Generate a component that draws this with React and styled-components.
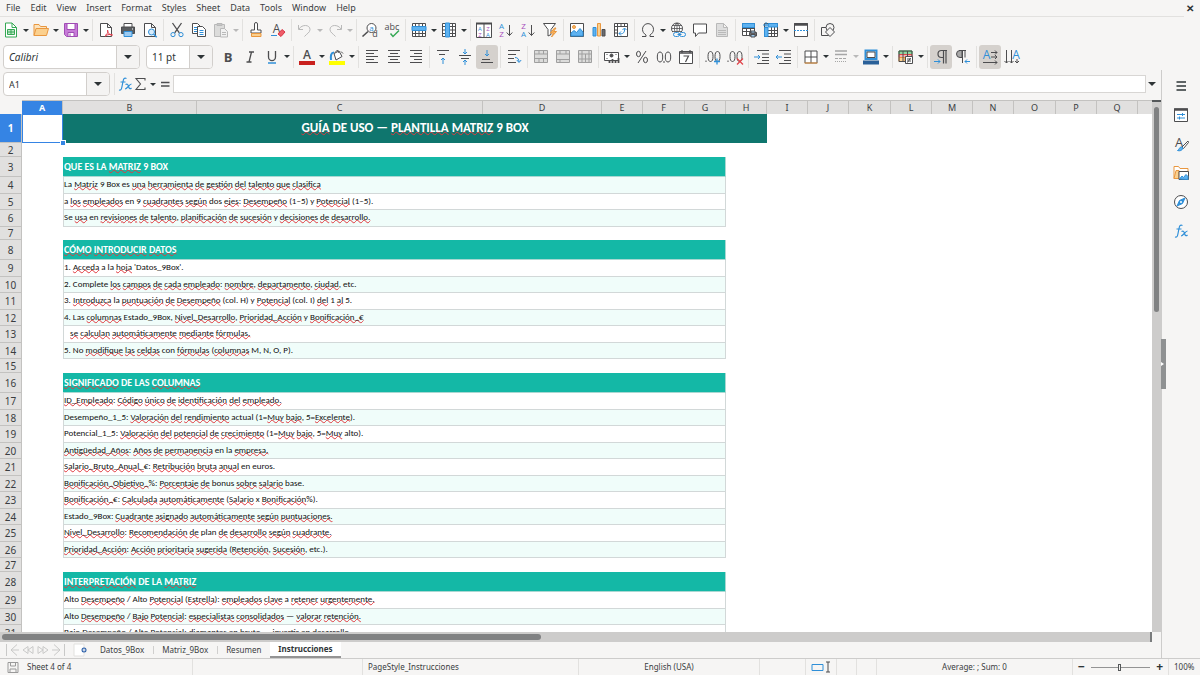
import { Fragment } from "react";
import styled, { createGlobalStyle, css } from "styled-components";

const GlobalStyle = createGlobalStyle`
  * {
    box-sizing: border-box;
  }

  body {
    margin: 0;
    background: #f6f5f4;
    color: #3a3d3f;
    font-family: "Noto Sans", sans-serif;
    font-size: 9px;
  }

  button, select, input {
    margin: 0;
    padding: 0;
    border: 0;
    background: none;
    color: inherit;
    font-family: inherit;
    font-size: inherit;
  }
`

const Window = styled.div`
  display: flex;
  flex-direction: column;
  height: 100vh;
  overflow: hidden;
  white-space: nowrap;
`

/* ---------- icons ---------- */

const INK = '#4d4d4f'
const BLUE = '#2f8fd8'
const ORANGE = '#e9973f'
const PURPLE = '#a64bbb'
const MUTED = '#b9b9b9'

const IconSvg = styled.svg`
  display: block;
  width: 16px;
  height: 16px;
  flex: none;
  overflow: visible;
  fill: none;
  stroke: ${INK};
  stroke-width: 1;

  text {
    stroke: none;
    fill: ${INK};
    font-family: "Open Sans", sans-serif;
    text-anchor: middle;
  }
`

const page = 'M2.5 1.5h7l4 4v9h-11z M9.5 1.5v4h4'

const icons = {
  new: <>
    <path d="M2.5 1h6.5l4.5 4.5v9.5h-11z" stroke="#35a854" fill="#fff" />
    <path d="M9 1v4.5h4.5" stroke="#35a854" />
    <path d="M4.5 7.5h7v5h-7zM4.5 10h7M8 7.5v5" stroke="#35a854" fill="#bfe8c8" />
  </>,
  open: <>
    <path d="M1 13.5v-11h5l1.5 2h6v2" stroke={ORANGE} fill="#fbe3bd" />
    <path d="M1 13.5l2-7h12.5l-2 7z" stroke={ORANGE} fill="#fbd08e" />
  </>,
  save: <>
    <path d="M1.5 1.5h13v13h-11l-2-2z" stroke="#a04cb4" fill="#c77bd8" />
    <path d="M4 1.5h8v6h-8z" stroke="#a04cb4" fill="#fff" />
    <path d="M5 10.5h6v4h-6z" stroke="#a04cb4" fill="#fff" />
    <path d="M7 11.5v3" stroke="#a04cb4" />
  </>,
  pdf: <>
    <path d={page} fill="#fff" />
    <path d="M7 13.5c3-1.5 3-4 2.5-5.5M9.5 8c0 3 2 5 5 5.5M7 14.5c1-1.5 4-2.5 7.5-2" stroke="#df3e4c" />
  </>,
  print: <>
    <path d="M4 5v-3.5h8v3.5" fill="#fff" />
    <path d="M1.5 5h13v6.5h-13z" fill="#5a5d60" />
    <path d="M4 9.5h8v5h-8z" fill="#9ccaf0" stroke={BLUE} />
    <path d="M12 7h1" stroke="#fff" />
  </>,
  preview: <>
    <path d={page} fill="#fff" />
    <circle cx="9.5" cy="10" r="3" stroke={BLUE} fill="#d7ebfa" />
    <path d="M11.7 12.2l3 3" stroke={BLUE} strokeWidth="1.5" />
  </>,
  cut: <>
    <path d="M3.5 1l6.8 9.8M12.5 1l-6.8 9.8" strokeWidth="1.3" />
    <circle cx="4" cy="12.6" r="2.1" stroke={BLUE} />
    <circle cx="12" cy="12.6" r="2.1" stroke={BLUE} />
  </>,
  copy: <>
    <path d="M1.5 1.5h5l3 3v7h-8z" fill="#fff" />
    <path d="M3 5.5h3M3 7.5h3M3 9.5h3" stroke={BLUE} />
    <path d="M6.5 4.5h5l3 3v7h-8z" fill="#fff" />
    <path d="M8.5 8.5h4M8.5 10.5h4M8.5 12.5h4" stroke={BLUE} />
  </>,
  paste: <>
    <path d="M1.5 2.5h10v12h-10z" fill="#dcdcdb" stroke={MUTED} />
    <path d="M4 1.5h5v2h-5z" fill="#c6c6c6" stroke={MUTED} />
    <path d="M7.5 6.5h4l3 3v5.5h-7z" fill="#f1f1f1" stroke={MUTED} />
    <path d="M9 10.5h4M9 12.5h4" stroke={MUTED} />
  </>,
  clone: <>
    <path d="M6.5 8v-6a1.5 1.5 0 0 1 3 0v6h3.5v3h-10v-3z" fill="#fff" />
    <path d="M3.5 11.5h9.5v3h-9.5z" stroke={ORANGE} fill="#fbd08e" />
  </>,
  clear: <>
    <text x="6.5" y="11" fontSize="12">A</text>
    <path d="M1 13.5h6" stroke={BLUE} />
    <path d="M8 12l4-4.5 3 2.5-4 4.5z" fill="#ef5c68" stroke="#d93445" />
  </>,
  undo: <path d="M1.5 3v4.5h4.5M2 7c3-5 11-4.5 11 .5 0 3-3 4-5.5 7" stroke={MUTED} />,
  redo: <path d="M14.5 3v4.5h-4.5M14 7c-3-5-11-4.5-11 .5 0 3 3 4 5.5 7" stroke={MUTED} />,
  find: <>
    <circle cx="9.5" cy="6" r="4.5" fill="#fff" />
    <path d="M6 9.5l-5.5 5" strokeWidth="1.6" />
    <text x="9.5" y="8.5" fontSize="8" style={{ fill: BLUE }}>a</text>
    <text x="13" y="15" fontSize="9">d</text>
  </>,
  spell: <>
    <text x="8" y="7.5" fontSize="9">abc</text>
    <path d="M6.5 11.5l2.5 3 6-6" stroke="#35a854" strokeWidth="1.5" />
  </>,
  row: <>
    <path d="M1.5 1.5h13v13h-13zM1.5 8.5h13M1.5 11.5h13M4.5 1.5v13M8 1.5v13M11.5 1.5v13" fill="#fff" />
    <path d="M1 4.5h14v4h-14z" fill="#5eb2f0" stroke={BLUE} />
  </>,
  column: <>
    <path d="M1.5 1.5h13v13h-13zM1.5 4.5h13M1.5 8h13M1.5 11.5h13M11.5 1.5v13M8.5 1.5v13" fill="#fff" />
    <path d="M4.5 1h4v14h-4z" fill="#5eb2f0" stroke={BLUE} />
  </>,
  sort: <>
    <path d="M.5 1.5h15v14h-15z" fill="#fff" />
    <path d="M0 1.5h16" strokeWidth="2" />
    <path d="M8 2v13" />
    <text x="4" y="8.5" fontSize="6" style={{ fill: BLUE }}>A</text>
    <text x="4" y="14.5" fontSize="6" style={{ fill: PURPLE }}>Z</text>
    <text x="12" y="8.5" fontSize="6" style={{ fill: PURPLE }}>Z</text>
    <text x="12" y="14.5" fontSize="6" style={{ fill: BLUE }}>A</text>
  </>,
  asc: <>
    <text x="3.5" y="7" fontSize="8" style={{ fill: BLUE }}>A</text>
    <text x="3.5" y="15" fontSize="8" style={{ fill: PURPLE }}>Z</text>
    <path d="M11.5 3v10.5M8.7 10.5l2.8 3 2.8-3" />
  </>,
  desc: <>
    <text x="3.5" y="7" fontSize="8" style={{ fill: PURPLE }}>Z</text>
    <text x="3.5" y="15" fontSize="8" style={{ fill: BLUE }}>A</text>
    <path d="M11.5 3v10.5M8.7 10.5l2.8 3 2.8-3" />
  </>,
  filter: <>
    <path d="M1.5 1.5h12l-4.5 6v5l-3 1.5v-6.5z" fill="#fff" />
    <path d="M12.5 6l-4 5h3l-2 4 5-5.5h-3l2.5-3.5z" fill="#fbb862" stroke={ORANGE} />
  </>,
  image: <>
    <path d="M1.5 1.5h13v13h-13z" fill="#fff" />
    <circle cx="5" cy="5" r="1.5" fill="#fbb862" stroke={ORANGE} />
    <path d="M2 14v-3l3-2.5 2.5 2 3.5-4 3 3.5v4z" fill="#5eb2f0" stroke={BLUE} />
  </>,
  chart: <>
    <path d="M2 5.5h3v8.5h-3z" fill="#5eb2f0" stroke={BLUE} />
    <path d="M6.5 1.5h3v12.5h-3z" fill="#fbd08e" stroke={ORANGE} />
    <path d="M11 7.5h3v6.5h-3z" fill="#6d6d6f" />
  </>,
  pivot: <>
    <path d="M1.5 1.5h13v13h-13zM1.5 4.5h13M4.5 1.5v13M8 1.5v3M11.5 1.5v3M1.5 8h3M1.5 11h3" fill="#fff" />
    <path d="M6 11.5c4 1 6-1 5.5-5M9.5 8l2-2 2 2M8 9.5l-2 2 2 2" stroke={BLUE} />
  </>,
  omega: <path d="M2 14.5h4v-1.5c-2-1.3-3.5-3-3.5-5.7a5.5 5.7 0 0 1 11 0c0 2.7-1.5 4.4-3.5 5.7v1.5h4" />,
  link: <>
    <circle cx="7" cy="6.5" r="5.5" fill="#fff" />
    <path d="M1.5 6.5h11M7 1v11M3 3.5h8M3 9.5h8M7 1c-3.5 3-3.5 8 0 11M7 1c3.5 3 3.5 8 0 11" strokeWidth=".8" />
    <path d="M3 10h13v5h-13z" fill="#f6f5f4" stroke="none" />
    <rect x="3.5" y="10.5" width="6" height="4" rx="2" stroke={BLUE} />
    <rect x="9.5" y="10.5" width="6" height="4" rx="2" stroke={BLUE} />
    <path d="M7.5 12.5h4" stroke={BLUE} />
  </>,
  comment: <path d="M1.5 2h13v9h-8l-3 3.5v-3.5h-2z" fill="#fff" />,
  headers: <>
    <path d={page} stroke={MUTED} fill="#dedede" />
    <path d="M4 8.5h8M4 10.5h8M4 12.5h8" stroke={MUTED} />
  </>,
  printArea: <>
    <path d="M1.5 1.5h12v12h-12zM1.5 9.5h12M1.5 6.5h12M5.5 1.5v12M9.5 1.5v12" fill="#fff" />
    <path d="M1.5 1.5h12v4h-12z" fill="#5eb2f0" stroke={BLUE} />
    <path d="M8.5 10.5h7v3.5h-7z" fill="#6d6d6f" />
    <path d="M10 9h4v2h-4zM10 12.5h4v2.5h-4z" fill="#9ccaf0" />
  </>,
  freeze: <>
    <path d="M1.5 1.5h13v13h-13z" fill="#fff" />
    <path d="M5 8.5h9.5M5 11.5h9.5M8.5 5v9.5M11.5 5v9.5" />
    <path d="M1.5 5.5h3.5v9h-3.5zM5 1.5h9.5v3.5h-9.5z" fill="#5eb2f0" stroke={BLUE} />
    <path d="M0 3h6M3 0v6" stroke={BLUE} />
  </>,
  split: <>
    <path d="M1.5 1.5h13v13h-13z" fill="#fff" />
    <path d="M1 2.5h14" strokeWidth="2.5" />
    <path d="M1 8.5h14" stroke={BLUE} strokeDasharray="2 1" />
  </>,
  shapes: <>
    <path d="M1.5 5.5h7v8h-7z" />
    <circle cx="10" cy="5.5" r="4" fill="#f6f5f4" />
    <path d="M10 5.5l4.5 4.5-4.5 4.5-4.5-4.5z" fill="#f6f5f4" />
  </>,
  bold: <text x="8" y="12.5" fontSize="13" fontWeight="700">B</text>,
  italic: <path d="M7 3h5M4.5 13h5M9.5 3l-2.5 10" strokeWidth="1.3" />,
  underline: <>
    <path d="M4.500 2v6a3.500 3.700 0 0 0 7 0v-6" strokeWidth="1.300" />
    <path d="M4 14h8" stroke={BLUE} strokeWidth="1.500" />
  </>,
  fontColor: <>
    <text x="8" y="10" fontSize="12" fontWeight="600">A</text>
    <path d="M0 14h16" stroke="#c9211e" strokeWidth="4" />
  </>,
  highlight: <>
    <path d="M5 4.5l5-2.5 3 5.5-6 3.5z" fill="#fff" />
    <path d="M6 3.5l2.5-2.5 1.5 3M12 2.5l2 2" />
    <path d="M5 3.5c-3 0-3.5 3-3 7.5" stroke={BLUE} strokeWidth="2" />
    <path d="M0 14h16" stroke="#ffff00" strokeWidth="4" />
  </>,
  left: <path d="M2 1.5h12M2 4.5h8M2 7.5h12M2 10.5h8M2 13.5h12" />,
  center: <path d="M2 1.5h12M4 4.5h8M2 7.5h12M4 10.5h8M2 13.5h12" />,
  right: <path d="M2 1.5h12M6 4.5h8M2 7.5h12M6 10.5h8M2 13.5h12" />,
  top: <>
    <path d="M2 1.5h12M4 5.5h6" />
    <path d="M8 15v-6M6 11l2-2 2 2" stroke={BLUE} />
  </>,
  middle: <>
    <path d="M2 6.5h12M4 9.5h8" />
    <path d="M8 0v5M6 3l2 2 2-2M8 16v-5M6 13l2-2 2 2" stroke={BLUE} />
  </>,
  bottom: <>
    <path d="M3 10.5h8M2 13.5h12" />
    <path d="M8 1v6M6 5l2 2 2-2" stroke={BLUE} />
  </>,
  wrap: <>
    <path d="M2 1.5h12M2 5.5h8M2 9.5h6M2 13.5h8" />
    <path d="M9 8.500c2.500 0 4 1.500 4 4.500M10.800 11l2.200 2.500 2.200-2.500" stroke={BLUE} />
  </>,
  merge: <path d="M1.5 1.5h13v12h-13zM1.5 5h13M1.5 9.5h13M6 1.5v3.5M10.5 1.5v3.5M6 9.5v4M10.5 9.5v4" fill="#dcdcdb" stroke="#9f9f9f" />,
  mergeCells: <path d="M1.5 1.5h13v12h-13zM1.5 5h13M1.5 10.5h13M5 1.5v3.5M11 1.5v3.5M5 10.5v3" fill="#dcdcdb" stroke="#9f9f9f" />,
  unmerge: <path d="M1.5 1.5h13v12h-13zM1.5 5h13M1.5 10h13M5 1.5v12M8.5 5v8.5M12 1.5v12" fill="#dcdcdb" stroke="#9f9f9f" />,
  currency: <>
    <path d="M.5 3.5h14v8h-14z" fill="#fff" />
    <circle cx="7.5" cy="6.5" r="1.5" fill={INK} />
    <path d="M2.5 5.5h1M11.5 5.5h1M2.500 9.500h1" />
    <path d="M5.500 14v-3M8.500 14v-4M11.500 14v-3M14.500 14v-5" strokeWidth="1.800" />
  </>,
  percent: <>
    <ellipse cx="4.5" cy="5" rx="2" ry="2.7" />
    <ellipse cx="11.5" cy="11" rx="2" ry="2.7" />
    <path d="M12 2l-8 12" />
  </>,
  number: <>
    <ellipse cx="4" cy="8" rx="2.7" ry="5" />
    <ellipse cx="12" cy="8" rx="2.7" ry="5" />
    <path d="M8 12v2" />
  </>,
  date: <>
    <path d="M1.5 2.5h13v12h-13z" fill="#fff" />
    <path d="M1 4h14" strokeWidth="1.5" />
    <path d="M4 1v3M12 1v3M5.5 7h5l-3 6" strokeWidth="1.2" />
  </>,
  addDecimal: <>
    <path d="M1 11.5v1.5" />
    <ellipse cx="5.5" cy="7.5" rx="2.5" ry="5" />
    <ellipse cx="12.5" cy="7.5" rx="2.5" ry="5" />
    <path d="M12 9.5v6M9 12.5h6" stroke={BLUE} strokeWidth="1.3" />
  </>,
  removeDecimal: <>
    <path d="M1 11.5v1.5" />
    <ellipse cx="5.5" cy="7.5" rx="2.5" ry="5" />
    <ellipse cx="12.5" cy="7.5" rx="2.5" ry="5" />
    <path d="M10 9.5l6 6M16 9.5l-6 6" stroke="#e2454b" strokeWidth="1.3" />
  </>,
  indent: <>
    <path d="M3 1.5h12M8 5h7M8 8.5h7M8 11.5h7M3 14.5h12" />
    <path d="M0 8h6M4 6l2 2-2 2" stroke={BLUE} />
  </>,
  outdent: <>
    <path d="M3 1.5h12M8 5h7M8 8.5h7M8 11.5h7M3 14.5h12" />
    <path d="M6 8h-6M2 6l-2 2 2 2" stroke={BLUE} />
  </>,
  borders: <>
    <path d="M2 2h12v12h-12z" fill="#fff" />
    <path d="M8 2v12M2 8h12" />
    <path d="M1.5 14h13" stroke={ORANGE} />
  </>,
  borderStyle: <>
    <path d="M2 2h12M2 5.5h12" stroke="#a6a6a6" strokeWidth="1.5" />
    <path d="M2 9.5h12" stroke="#a6a6a6" strokeDasharray="3 1" />
    <path d="M2 12.5h12" stroke="#a6a6a6" strokeDasharray="1 1" />
  </>,
  borderColor: <>
    <path d="M2.5 1.5h11v8.5h-11z" fill="#fff" stroke={BLUE} strokeWidth="2" />
    <path d="M4 3h8v5.500h-8z" />
    <path d="M0 13.5h16" stroke="#2a6099" strokeWidth="4" />
  </>,
  conditional: <>
    <path d="M1 2h13v3.500h-13z" fill="#8fd6a0" stroke="#35a854" />
    <path d="M1 5.500h13v3h-13z" fill="#f5b3b3" stroke="#e2454b" />
    <path d="M1 8.500h6v4h-6z" fill="#fbd08e" stroke={ORANGE} />
    <path d="M1 2h13v10.500h-13zM5 2v10.500M9.500 2v6.500" />
    <path d="M7.500 7.500h7v7h-7z" fill="#fff" />
    <path d="M9 10h4M9 12h4M12.500 9l-3 4.500" />
  </>,
  ltr: <>
    <path d="M14 1.5h-5.5a3.5 3.5 0 0 0 0 7h1.5M10.5 1.5v13M13 1.5v13" strokeWidth="1.2" />
    <path d="M1 12.5h6M5 10.5l2 2-2 2" stroke={BLUE} />
  </>,
  rtl: <>
    <path d="M7 1.5h-2a3.5 3.500 0 0 0 0 7h2z" fill="#a9a9a9" />
    <path d="M4 1.500h7M7.5 1.5v12.500M10 1.5v7" />
    <path d="M15 12.5h-5M12 10.5l-2 2 2 2" stroke={BLUE} />
  </>,
  textHorizontal: <>
    <text x="4.5" y="10" fontSize="12" style={{ fill: BLUE }}>A</text>
    <path d="M9 3.5h6M13 1.5l2 2-2 2M9 8h6M13 6l2 2-2 2M1 13.5h14M13 11.5l2 2-2 2" />
  </>,
  textVertical: <>
    <text x="12" y="10" fontSize="12" style={{ fill: BLUE }}>A</text>
    <path d="M2.5 1v13M.5 12l2 2 2-2M7.5 1v13M5.5 12l2 2 2-2M13 10v4M11 12l2 2 2-2" />
  </>,
  fx: <>
    <path d="M9.5 2.5c-2.5-1-3 .5-3.5 3l-1.2 6c-.4 2-1 3-2.8 2.500M3.5 6h5" stroke={BLUE} strokeWidth="1.2" />
    <path d="M8.5 8.5c2-1 2.5 0 3 2s1.5 3 3 1.5M14.5 8c-2 0-4.5 5-6.500 5" stroke={BLUE} strokeWidth="1.2" />
  </>,
  sigma: <path d="M12 4.5v-2h-9l4.5 5.5-4.5 5.5h9v-2" strokeWidth="1.1" />,
  equals: <path d="M4 6.5h8.5M4 10h8.5" strokeWidth="1.5" />,
  menu: <path d="M3.5 4h9.5M3.5 8h9.5M3.5 12h9.5" stroke="#2e3436" strokeWidth="1.6" />,
  properties: <>
    <path d="M1.5 2h13v12.5h-13z" fill="#fff" />
    <path d="M1 2.5h14" strokeWidth="2.5" />
    <path d="M4 7.5h8M9.5 6v3M4 11h8M6.5 9.5v3" stroke={BLUE} />
  </>,
  styles: <>
    <text x="6" y="10.5" fontSize="13">A</text>
    <path d="M15 5l-6 6 1.5 1.5 5-6z" fill="#fff" />
    <path d="M4.5 14.5c2 .8 5 0 5.5-2.500l-1.5-1.2c-2 .2-2 2.500-4 3.700z" fill="#5eb2f0" stroke={BLUE} />
  </>,
  gallery: <>
    <path d="M1 13.5v-12h4.5l1.5 2h8v3" stroke={ORANGE} fill="#fff" />
    <path d="M1 13.5l2-8h3v8z" stroke={ORANGE} fill="#fbd08e" />
    <path d="M6 6.5h9.5v8h-9.5z" fill="#fff" />
    <path d="M6.5 14l2.5-3 1.5 1.5 2.5-3 2 2v3z" fill="#5eb2f0" stroke={BLUE} />
  </>,
  navigator: <>
    <circle cx="8" cy="8" r="6.5" fill="#fff" />
    <path d="M12 4l-2.5 5.5-5.5 2.5 2.5-5.5z" fill={BLUE} stroke={BLUE} />
    <circle cx="8" cy="8" r="1" fill="#fff" stroke="none" />
  </>,
  saved: <path d="M3 3.5h10v10h-10zM5.5 3.5v3.5h5v-3.500M5 13.5v-3.500h6v3.500" stroke="#9a9a9a" />,
  addSheet: <>
    <path d="M1 2h10v12h-10z" fill="#fff" stroke="#e2e1df" />
    <circle cx="11" cy="8" r="2.5" fill="#2a5ea8" stroke="none" />
    <path d="M9.500 8h3M11 6.5v3" stroke="#fff" />
  </>,
  first: <path d="M1.5 2v12M12 2.5l-6 5.5 6 5.5M6 8h8" stroke="#c9c9c8" />,
  previous: <path d="M8 4.5l-5 3.5 5 3.5zM13 4.5l-5 3.5 5 3.5z" stroke="#c9c9c8" />,
  next: <path d="M3 4.5l5 3.5-5 3.5zM8 4.5l5 3.5-5 3.5z" stroke="#c9c9c8" />,
  last: <path d="M14.5 2v12M4 2.5l6 5.5-6 5.5M2 8h8" stroke="#c9c9c8" />,
}

const Icon = ({ name }) => (
  <IconSvg viewBox="0 0 16 16" aria-hidden="true">{icons[name]}</IconSvg>
)

/* ---------- menu and toolbars ---------- */

const MenuBar = styled.nav`
  display: flex;
  flex: none;
  align-items: center;
  gap: 10px;
  height: 17px;
  margin-right: 16px;
  padding-left: 6px;
  border-bottom: 1px solid #e2e1df;
`

const MenuItem = styled.button`
  line-height: 16px;
`

const CloseButton = styled.button`
  margin-left: auto;
  margin-right: -10px;
  color: #2e3436;
  font-size: 10px;
  font-weight: 700;
  line-height: 16px;
`

const Toolbar = styled.div`
  display: flex;
  flex: none;
  align-items: center;
  height: ${props => props.$height}px;
  padding-left: ${props => props.$inset || 0}px;
`

const ToolButton = styled.button`
  display: flex;
  flex: none;
  align-items: center;
  justify-content: center;
  width: 22px;
  height: 24px;
  border-radius: 3px;
  ${props => props.$active && css`
    background: #d5d1cd;
  `}
`

const DropButton = styled.button`
  display: flex;
  flex: none;
  align-items: center;
  justify-content: center;
  width: 8px;
  height: 24px;
`

const Triangle = styled.span`
  border-left: ${props => props.$size}px solid transparent;
  border-right: ${props => props.$size}px solid transparent;
  border-top: ${props => props.$size}px solid ${props => props.$muted ? '#b9b9b9' : '#2e3436'};
`

const Divider = styled.span`
  flex: none;
  width: 1px;
  height: 22px;
  margin: 0 2px;
  background: #e2e1df;
`

const ComboBox = styled.label`
  position: relative;
  flex: none;
  width: ${props => props.$width}px;
  height: 24px;
  margin-right: ${props => props.$after}px;
`

const ComboSelect = styled.select`
  appearance: none;
  width: 100%;
  height: 100%;
  padding-left: 5px;
  border: 1px solid #d2cfcc;
  border-radius: 4px;
  background: #fff;
  color: #2e3436;
  font-size: ${props => props.$small ? 9 : 10}px;
  font-style: ${props => props.$italic ? 'italic' : 'normal'};
`

const ComboArrow = styled.span`
  position: absolute;
  top: 1px;
  right: 1px;
  bottom: 1px;
  display: flex;
  align-items: center;
  justify-content: center;
  width: 23px;
  border-left: 1px solid #d2cfcc;
  border-radius: 0 3px 3px 0;
  background: #f4f3f2;
  pointer-events: none;
`

const Combo = ({ label, value, width, after, italic, small }) => (
  <ComboBox $width={width} $after={after}>
    <ComboSelect aria-label={label} $italic={italic} $small={small}>
      <option>{value}</option>
    </ComboSelect>
    <ComboArrow><Triangle $size={4} /></ComboArrow>
  </ComboBox>
)

// "|" is a divider, "+" after a name adds a drop-down arrow, "-" a disabled one, "!" marks it pressed
const standardTools = 'new+ open+ save+ | pdf print preview | cut copy paste- | clone clear | undo- redo- | find spell | row+ column+ | sort asc desc filter | image chart pivot | omega+ link comment headers | printArea freeze+ split | shapes'
const formatTools = 'bold italic underline+ | fontColor+ highlight+ | left center right | top middle bottom! | wrap | merge mergeCells unmerge | currency+ percent number date | addDecimal removeDecimal | indent outdent | borders+ borderStyle- borderColor+ | conditional+ | ltr! rtl | textHorizontal! textVertical'

const Tools = ({ list }) => list.split(' ').map((item, i) => {
  if (item === '|') return <Divider key={i} />
  const name = item.replace(/[+!-]/, '')
  const drop = item.endsWith('+') || item.endsWith('-')
  return (
    <Fragment key={i}>
      <ToolButton aria-label={name} $active={item.endsWith('!')}><Icon name={name} /></ToolButton>
      {drop && (
        <DropButton aria-label={`${name} options`}>
          <Triangle $size={3} $muted={item.endsWith('-')} />
        </DropButton>
      )}
    </Fragment>
  )
})

/* ---------- main area ---------- */

const Main = styled.main`
  display: flex;
  flex: 1;
  min-height: 0;
`

const Document = styled.section`
  display: flex;
  flex: 1;
  flex-direction: column;
  min-width: 0;
`

const FormulaBar = styled.div`
  display: flex;
  flex: none;
  align-items: center;
  height: 30px;
  padding: 0 5px 2px 3px;
`

const FormulaButton = styled(ToolButton)`
  width: 16px;
`

const FormulaInput = styled.input`
  flex: 1;
  min-width: 0;
  height: 18px;
  margin: 0 2px 0 0;
  border: 1px solid #d8d6d4;
  background: #fff;
`

const SheetArea = styled.div`
  display: flex;
  flex: 1;
  min-height: 0;
`

const SheetView = styled.div`
  flex: 1;
  min-width: 0;
  overflow: hidden;
  background: #fff;
`

const Sheet = styled.table`
  table-layout: fixed;
  width: 1179px;
  border-spacing: 0;

  th, td {
    padding: 0;
    overflow: hidden;
  }
`

const Column = styled.col`
  width: ${props => props.$width}px;
`

const ColumnHead = styled.th`
  height: 14px;
  border: solid #c3c2c0;
  border-width: 1px 1px 0 0;
  background: ${props => props.$selected ? '#3584e4' : '#e1e0df'};
  color: ${props => props.$selected ? '#fff' : '#3a3d3f'};
  font-weight: ${props => props.$selected ? 700 : 400};
  line-height: 13px;
`

const Corner = styled.td`
  height: 14px;
  background: #f6f5f4;
`

const RowHead = styled.th`
  height: ${props => props.$height}px;
  border: solid #c3c2c0;
  border-width: 0 1px 1px 0;
  background: ${props => props.$selected ? '#3584e4' : '#e1e0df'};
  color: ${props => props.$selected ? '#fff' : '#3a3d3f'};
  font-weight: ${props => props.$selected ? 700 : 400};
  font-size: 10px;
  line-height: 12px;
`

const CellBase = styled.td`
  color: #111;
  font-family: Carlito, Lato, sans-serif;
  line-height: 12px;
  text-align: left;
`

const SelectedCell = styled(CellBase)`
  && {
    position: relative;
    overflow: visible;
  }
  outline: 1px solid #3584e4;
  outline-offset: -1px;
`

const FillHandle = styled.span`
  position: absolute;
  right: -2px;
  bottom: -2px;
  width: 4px;
  height: 4px;
  background: #3584e4;
  box-shadow: 0 0 0 1px #fff;
`

const TitleCell = styled(CellBase)`
  && {
    padding-bottom: 2px;
  }
  background: #0f766e;
  color: #fff;
  font-size: 13px;
  font-weight: 700;
  text-align: center;
`

const SectionCell = styled(CellBase)`
  && {
    padding-left: 1px;
  }
  border: solid #a9d8d2;
  border-width: 0 1px 1px 0;
  background: #14b8a6;
  color: #fff;
  font-size: 10px;
  font-weight: 700;
`

const TextCell = styled(CellBase)`
  && {
    padding-bottom: 2px;
  }
  border: solid #d2d8d8;
  border-width: 0 1px 1px 1px;
  background: ${props => props.$shaded ? '#f0fdfa' : '#fff'};
  font-size: 9px;
  white-space: pre;
`

const Misspelt = styled.span`
  text-decoration: underline wavy #e0393e 1px;
  text-decoration-skip-ink: none;
  text-underline-offset: -1px;
`

const columns = [
  ['A', 41], ['B', 134], ['C', 286], ['D', 119], ['E', 41], ['F', 42], ['G', 41], ['H', 41], ['I', 41],
  ['J', 41], ['K', 42], ['L', 41], ['M', 41], ['N', 41], ['O', 42], ['P', 41], ['Q', 41], ['', 41],
]

// words between tildes get the spelling wave
const title = '~GUÍA~ DE USO — ~PLANTILLA~ ~MATRIZ~ 9 BOX'
const sections = [
  {
    heading: 'QUE ES LA ~MATRIZ~ 9 BOX',
    shadeFirst: true,
    lines: [
      'La ~Matriz~ 9 Box es ~una~ ~herramienta~ ~de~ ~gestión~ ~del~ ~talento~ ~que~ ~clasifica~',
      'a ~los~ ~empleados~ en 9 ~cuadrantes~ ~según~ dos ~ejes~: ~Desempeño~ (1–5) y ~Potencial~ (1–5).',
      'Se ~usa~ en ~revisiones~ ~de~ ~talento~, ~planificación~ ~de~ ~sucesión~ y ~decisiones~ ~de~ ~desarrollo.~',
    ],
  },
  {
    heading: '~CÓMO~ ~INTRODUCIR~ ~DATOS~',
    lines: [
      "1. ~Acceda~ a la ~hoja~ 'Datos_9Box'.",
      '2. Complete ~los~ ~campos~ ~de~ ~cada~ ~empleado~: ~nombre~, ~departamento~, ~ciudad~, etc.',
      '3. ~Introduzca~ la ~puntuación~ ~de~ ~Desempeño~ (col. H) y ~Potencial~ (col. I) ~del~ 1 ~al~ 5.',
      '4. Las ~columnas~ Estado_9Box, ~Nivel_Desarrollo~, ~Prioridad_Acción~ y ~Bonificación_€~',
      '   ~se~ ~calculan~ ~automáticamente~ ~mediante~ ~fórmulas.~',
      '5. No ~modifique~ ~las~ ~celdas~ con ~fórmulas~ (~columnas~ M, N, O, P).',
    ],
  },
  {
    heading: '~SIGNIFICADO~ DE LAS ~COLUMNAS~',
    lines: [
      '~ID_Empleado~: ~Código~ ~único~ ~de~ ~identificación~ ~del~ ~empleado.~',
      'Desempeño_1_5: ~Valoración~ ~del~ ~rendimiento~ actual (1=~Muy~ ~bajo~, 5=~Excelente~).',
      'Potencial_1_5: ~Valoración~ ~del~ ~potencial~ ~de~ ~crecimiento~ (1=~Muy~ ~bajo~, 5=~Muy~ alto).',
      '~Antigüedad_Años~: ~Años~ ~de~ ~permanencia~ en la ~empresa.~',
      '~Salario_Bruto_Anual_~€: ~Retribución~ ~bruta~ ~anual~ en euros.',
      '~Bonificación_Objetivo_~%: ~Porcentaje~ ~de~ bonus ~sobre~ ~salario~ base.',
      '~Bonificación_~€: ~Calculada~ ~automáticamente~ (~Salario~ x ~Bonificación~%).',
      'Estado_9Box: ~Cuadrante~ ~asignado~ ~automáticamente~ ~según~ ~puntuaciones.~',
      '~Nivel_Desarrollo~: ~Recomendación~ ~de~ plan ~de~ ~desarrollo~ ~según~ ~cuadrante.~',
      '~Prioridad_Acción~: ~Acción~ ~prioritaria~ ~sugerida~ (~Retención~, ~Sucesión~, etc.).',
    ],
  },
  {
    heading: '~INTERPRETACIÓN~ DE LA ~MATRIZ~',
    lines: [
      'Alto ~Desempeño~ / Alto ~Potencial~ (~Estrella~): ~empleados~ ~clave~ a ~retener~ ~urgentemente.~',
      'Alto ~Desempeño~ / ~Bajo~ ~Potencial~: ~especialistas~ ~consolidados~ — ~valorar~ ~retención.~',
      '~Bajo~ ~Desempeño~ / Alto ~Potencial~: ~diamantes~ ~en~ ~bruto~ — ~invertir~ ~en~ ~desarrollo.~',
    ],
  },
]

const rows = [{ kind: 'title', text: title, height: 29 }]
sections.forEach(({ heading, shadeFirst, lines }, index) => {
  rows.push({ kind: 'gap', height: index === 1 ? 13 : 14 })
  rows.push({ kind: 'section', text: heading, height: 20 })
  lines.forEach((text, i) => {
    rows.push({ kind: 'text', text, height: i % 2 ? 16 : 17, shaded: shadeFirst ? i % 2 === 0 : i % 2 === 1 })
  })
})

const Spelled = ({ text }) => text.split('~').map((part, i) => (
  i % 2 ? <Misspelt key={i}>{part}</Misspelt> : part
))

const SheetRow = ({ row, number }) => (
  <tr>
    <RowHead scope="row" $height={row.height} $selected={number === 1}>{number}</RowHead>
    {number === 1 ? <SelectedCell><FillHandle /></SelectedCell> : <td />}
    {row.kind === 'title' && <TitleCell colSpan={7}><Spelled text={row.text} /></TitleCell>}
    {row.kind === 'section' && <SectionCell colSpan={6}><Spelled text={row.text} /></SectionCell>}
    {row.kind === 'text' && <TextCell colSpan={6} $shaded={row.shaded}><Spelled text={row.text} /></TextCell>}
  </tr>
)

const VerticalTrack = styled.div`
  flex: none;
  width: 9px;
  padding: 5px 2px 0;
  border-top: 2px solid #55585a;
  background: #cdcccb;
`

const VerticalThumb = styled.div`
  height: 39%;
  border-radius: 3px;
  background: #808182;
`

const HorizontalTrack = styled.div`
  flex: none;
  height: 10px;
  margin-right: 9px;
  padding: 2px;
  border-right: 2px solid #7b7d7e;
  background: #cdcccb;
`

const HorizontalThumb = styled.div`
  width: 47%;
  height: 6px;
  border-radius: 3px;
  background: #808182;
`

const TabBar = styled.div`
  display: flex;
  flex: none;
  align-items: stretch;
  height: 16px;
  padding-left: 5px;
`

const TabNav = styled.button`
  width: 15px;
`

const AddSheet = styled.button`
  width: 16px;
  margin: 0 2px 0 8px;
`

const Tab = styled.button`
  position: relative;
  padding: 0 9px;
  font-size: 8px;
  line-height: 14px;
  ${props => props.$active ? css`
    padding: 0 8px;
    border-bottom: 2px solid #949494;
    background: #fff;
    color: #2e3436;
    font-weight: 700;
  ` : css`
    & + &::before {
      content: "";
      position: absolute;
      top: 4px;
      left: 0;
      height: 8px;
      border-left: 1px solid #d0cfce;
    }
  `}
`

const Sidebar = styled.aside`
  position: relative;
  display: flex;
  flex: none;
  flex-direction: column;
  align-items: center;
  gap: 5px;
  width: 39px;
  padding-top: 4px;
  border-left: 1px solid #cdcccb;
`

const SidebarHandle = styled.button`
  position: absolute;
  top: 269px;
  left: -1px;
  display: flex;
  align-items: center;
  width: 5px;
  height: 50px;
  background: #8f9192;

  &::before {
    content: "";
    border: 2px solid transparent;
    border-left: 3px solid #fff;
    border-right: 0;
  }
`

const StatusBar = styled.footer`
  display: grid;
  flex: none;
  grid-template-columns: 192fr 170fr 216fr 181fr 46fr 31fr 20fr 20fr 196fr 96fr 32fr;
  height: 17px;
  border-top: 1px solid #cdcccb;
  font-size: 8px;
`

const StatusField = styled.div`
  display: flex;
  align-items: center;
  justify-content: ${props => props.$align || 'flex-start'};
  gap: 6px;
  min-width: 0;
  padding: 0 5px;
  line-height: 16px;

  & + & {
    border-left: 1px solid #e2e1df;
  }
`

const ModeIcon = styled.svg`
  flex: none;
  width: 20px;
  height: 12px;
  fill: none;
`

const ZoomButton = styled.button`
  flex: none;
  color: #2e3436;
  font-size: 12px;
  font-weight: 700;
  line-height: 14px;
`

const ZoomSlider = styled.input`
  appearance: none;
  flex: 1;
  min-width: 0;
  height: 8px;
  background: linear-gradient(#949494, #949494) center / 100% 1px no-repeat;

  &::-webkit-slider-thumb {
    appearance: none;
    width: 3px;
    height: 7px;
    border: 1px solid #55585a;
    background: #f6f5f4;
  }
`

const menus = ['File', 'Edit', 'View', 'Insert', 'Format', 'Styles', 'Sheet', 'Data', 'Tools', 'Window', 'Help']
const tabs = ['Datos_9Box', 'Matriz_9Box', 'Resumen', 'Instrucciones']
const decks = ['menu', 'properties', 'styles', 'gallery', 'navigator', 'fx']

export default function App() {
  return (
    <Window>
      <GlobalStyle />
      <MenuBar>
        {menus.map(menu => <MenuItem key={menu}>{menu}</MenuItem>)}
        <CloseButton aria-label="Close document">✕</CloseButton>
      </MenuBar>
      <Toolbar $height={26}>
        <Tools list={standardTools} />
      </Toolbar>
      <Toolbar $height={27} $inset={3}>
        <Combo label="Font name" value="Calibri" width={137} after={6} italic />
        <Combo label="Font size" value="11 pt" width={67} after={4} />
        <Tools list={formatTools} />
      </Toolbar>
      <Main>
        <Document>
          <FormulaBar>
            <Combo label="Name box" value="A1" width={107} after={2} small />
            <Divider />
            <FormulaButton aria-label="Function wizard"><Icon name="fx" /></FormulaButton>
            <FormulaButton aria-label="Select function"><Icon name="sigma" /></FormulaButton>
            <DropButton aria-label="Function options"><Triangle $size={3} /></DropButton>
            <FormulaButton aria-label="Formula"><Icon name="equals" /></FormulaButton>
            <FormulaInput aria-label="Input line" />
            <DropButton aria-label="Expand formula bar"><Triangle $size={4} /></DropButton>
          </FormulaBar>
          <SheetArea>
            <SheetView>
              <Sheet>
                <colgroup>
                  <Column $width={22} />
                  {columns.map(([name, width]) => <Column key={name} $width={width} />)}
                </colgroup>
                <thead>
                  <tr>
                    <Corner />
                    {columns.map(([name]) => (
                      <ColumnHead key={name} scope="col" $selected={name === 'A'}>{name}</ColumnHead>
                    ))}
                  </tr>
                </thead>
                <tbody>
                  {rows.map((row, i) => <SheetRow key={i} row={row} number={i + 1} />)}
                </tbody>
              </Sheet>
            </SheetView>
            <VerticalTrack><VerticalThumb /></VerticalTrack>
          </SheetArea>
          <HorizontalTrack><HorizontalThumb /></HorizontalTrack>
          <TabBar>
            {['first', 'previous', 'next', 'last'].map(name => (
              <TabNav key={name} aria-label={`${name} sheet`}><Icon name={name} /></TabNav>
            ))}
            <AddSheet aria-label="Add sheet"><Icon name="addSheet" /></AddSheet>
            {tabs.map(tab => <Tab key={tab} $active={tab === 'Instrucciones'}>{tab}</Tab>)}
          </TabBar>
        </Document>
        <Sidebar>
          {decks.map(deck => <ToolButton key={deck} aria-label={deck}><Icon name={deck} /></ToolButton>)}
          <SidebarHandle aria-label="Hide sidebar" />
        </Sidebar>
      </Main>
      <StatusBar>
        <StatusField><Icon name="saved" />Sheet 4 of 4</StatusField>
        <StatusField />
        <StatusField>PageStyle_Instrucciones</StatusField>
        <StatusField $align="center">English (USA)</StatusField>
        <StatusField />
        <StatusField>
          <ModeIcon viewBox="0 0 20 12">
            <path d="M1 3.5h11v6h-11z" stroke={BLUE} />
            <path d="M15 1h4M15 11h4M17 1v10" stroke={INK} />
          </ModeIcon>
        </StatusField>
        <StatusField />
        <StatusField />
        <StatusField $align="center">Average: ; Sum: 0</StatusField>
        <StatusField>
          <ZoomButton aria-label="Zoom out">−</ZoomButton>
          <ZoomSlider type="range" aria-label="Zoom" min="0" max="100" defaultValue="49" />
          <ZoomButton aria-label="Zoom in">+</ZoomButton>
        </StatusField>
        <StatusField>100%</StatusField>
      </StatusBar>
    </Window>
  )
}
